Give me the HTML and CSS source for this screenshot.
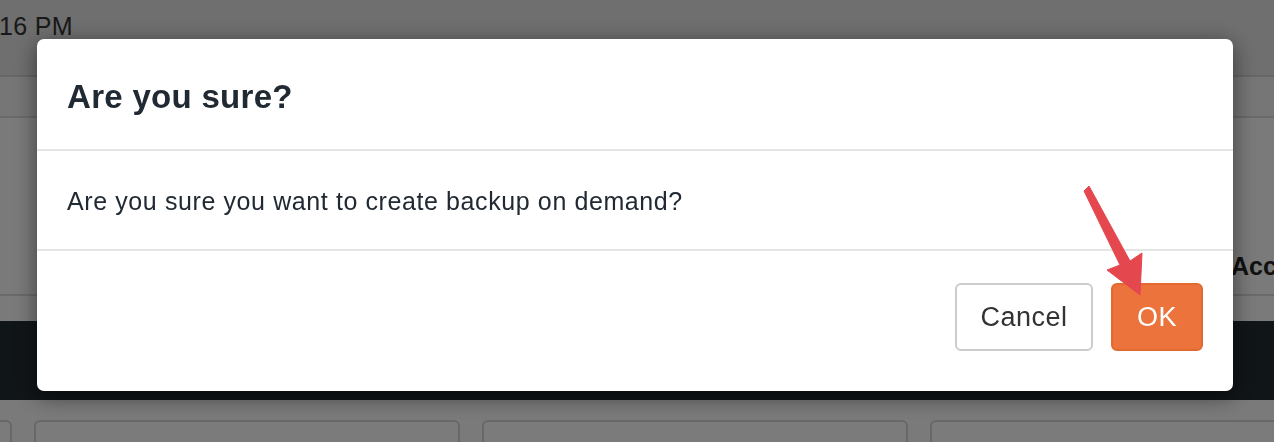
FILE: index.html
```html
<!DOCTYPE html>
<html lang="en">
<head>
  <meta charset="UTF-8">
  <meta name="viewport" content="width=device-width, initial-scale=1.0">
  <title>Backups</title>
  <link rel="stylesheet" href="styles.css">
</head>
<body>

  <div class="page">
    <div class="topbar">16 PM</div>
    <div class="subbar"></div>
    <div class="content">
      <h3 class="section-title">Accounts</h3>
    </div>
    <div class="strip"></div>
    <div class="darkband"></div>
    <div class="cards">
      <div class="card"></div>
      <div class="card"></div>
      <div class="card"></div>
      <div class="card"></div>
    </div>
  </div>

  <div class="backdrop"></div>

  <div class="modal">
    <div class="modal-header">
      <h4 class="modal-title">Are you sure?</h4>
    </div>
    <div class="modal-body">
      Are you sure you want to create backup on demand?
    </div>
    <div class="modal-footer">
      <button class="btn btn-default">Cancel</button>
      <button class="btn btn-primary">OK</button>
    </div>
  </div>

  <!-- annotation arrow pointing at OK -->
  <svg class="arrow" width="80" height="130" viewBox="1080 180 80 130">
    <polygon points="1084,191 1089,186 1130,261 1142,253 1140,295 1107,270 1120,265" fill="#e5474f" stroke="#e5474f" stroke-width="1" stroke-linejoin="round"/>
  </svg>

</body>
</html>
```

FILE: styles.css
```css
body {
  margin: 0;
  font-family: 'Liberation Sans', Arial, sans-serif;
  overflow: hidden;
  background: #f4f4f4;
}

.page {
  width: 1274px;
  height: 442px;
  overflow: hidden;
}

.topbar {
  height: 77px;
  background: #dedede;
  border-bottom: 2px solid #cdcdcd;
  box-sizing: border-box;
  font-size: 25px;
  letter-spacing: 0.3px;
  color: #333;
  padding-top: 12px;
  margin-left: -1px;
}

.subbar {
  height: 41px;
  background: #ececec;
  border-bottom: 2px solid #d4d4d4;
  box-sizing: border-box;
}

.content {
  height: 178px;
  background: #f4f4f4;
  border-bottom: 2px solid #d4d4d4;
  box-sizing: border-box;
  display: flex;
  align-items: flex-end;
}

.section-title {
  margin: 0 0 13px 1231px;
  font-size: 25px;
  font-weight: bold;
  color: #222;
  white-space: nowrap;
}

.strip {
  height: 25px;
  background: #f4f4f4;
}

.darkband {
  height: 79px;
  background: #212a31;
}

.cards {
  display: flex;
  gap: 22px;
  padding-top: 20px;
  margin-left: -414px;
}

.card {
  flex: 0 0 426px;
  height: 60px;
  border: 2px solid #d0d0d0;
  border-radius: 6px;
  box-sizing: border-box;
  background: #f6f6f6;
}

.backdrop {
  position: fixed;
  inset: 0;
  background: rgba(0, 0, 0, 0.5);
}

.modal {
  position: fixed;
  left: 37px;
  top: 39px;
  width: 1196px;
  height: 352px;
  background: #fff;
  border-radius: 7px;
  box-shadow: 0 5px 22px rgba(0, 0, 0, 0.5);
  color: #212933;
  display: flex;
  flex-direction: column;
}

.modal-header {
  height: 112px;
  padding: 0 30px;
  border-bottom: 2px solid #e5e5e5;
  box-sizing: border-box;
  display: flex;
  align-items: center;
}

.modal-title {
  margin: 0;
  font-size: 33px;
  font-weight: bold;
  letter-spacing: 0.3px;
  padding-top: 6px;
}

.modal-body {
  height: 100px;
  padding: 0 30px;
  border-bottom: 2px solid #e5e5e5;
  box-sizing: border-box;
  display: flex;
  align-items: center;
  font-size: 25px;
  letter-spacing: 0.6px;
  padding-top: 2px;
}

.modal-footer {
  display: flex;
  justify-content: flex-end;
  gap: 18px;
  padding: 32px 30px 0;
}

.btn {
  height: 68px;
  border-radius: 6px;
  font-family: inherit;
  font-size: 27px;
  letter-spacing: 0.5px;
  padding: 0;
  cursor: pointer;
}

.btn-default {
  width: 138px;
  background: #fff;
  border: 2px solid #cccccc;
  color: #333;
}

.btn-primary {
  width: 92px;
  background: #ec743c;
  border: 2px solid #e2692f;
  color: #fff;
}

.arrow {
  position: fixed;
  left: 1080px;
  top: 180px;
}
```
